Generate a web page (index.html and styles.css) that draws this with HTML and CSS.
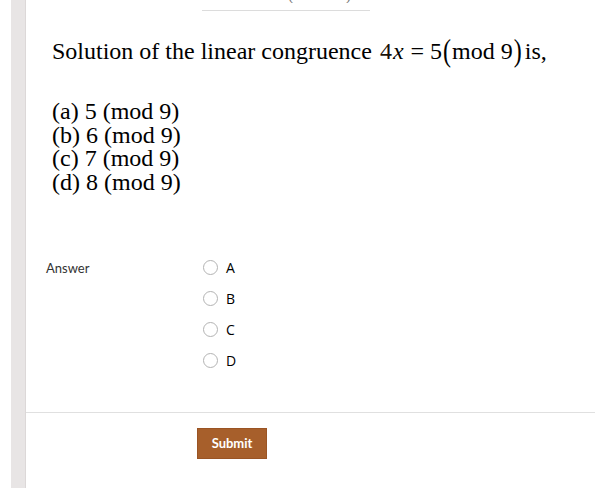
FILE: index.html
```html
<!DOCTYPE html>
<html>
<head>
<meta charset="utf-8">
<link rel="stylesheet" href="styles.css">
</head>
<body>
<div class="page">
  <div class="gutter"></div>
  <main class="main">
    <div class="topclip"><span class="topfrag">(mod 9)</span></div>
    <div class="topline"></div>
    <div class="question">
      <p class="title">Solution of the linear congruence <span class="math"><span class="m4">4</span><i class="mx">x</i><span class="meq">=</span><span class="m5">5</span><span class="paren">(</span><span class="mmod">mod 9</span><span class="paren">)</span></span><span class="tail">is,</span></p>
      <div class="options">
        <div class="opt">(a) 5 (mod 9)</div>
        <div class="opt">(b) 6 (mod 9)</div>
        <div class="opt">(c) 7 (mod 9)</div>
        <div class="opt">(d) 8 (mod 9)</div>
      </div>
    </div>
    <div class="answer">
      <div class="alabel">Answer</div>
      <div class="choices">
        <label class="choice"><span class="radio"></span><span class="ltr">A</span></label>
        <label class="choice"><span class="radio"></span><span class="ltr">B</span></label>
        <label class="choice"><span class="radio"></span><span class="ltr">C</span></label>
        <label class="choice"><span class="radio"></span><span class="ltr">D</span></label>
      </div>
    </div>
    <div class="sep"></div>
    <div class="actions"><button class="submit">Submit</button></div>
  </main>
</div>
</body>
</html>
```
FILE: styles.css
```css
html, body { margin: 0; padding: 0; background: #fff; }
body { font-family: "Liberation Serif", "Times New Roman", serif; color: #000; }
.page { display: flex; min-height: 488px; }
.gutter { width: 15px; margin-left: 11px; background: #e8e5e5; box-shadow: inset -1px 0 0 #dcd8d8; flex: none; }
.main { flex: 1; display: flex; flex-direction: column; }
.topclip { height: 3px; overflow: hidden; margin-left: 262px; width: 80px; }
.topfrag { display: block; font-size: 16px; line-height: 16px; margin-top: -13px; color: #777; letter-spacing: 2px; }
.topline { margin-left: 176px; width: 168px; height: 1px; background: #dcdcdc; margin-top: 7px; }
.question { padding-left: 26px; font-size: 24px; }
.title { margin: 26px 0 0; line-height: 28px; white-space: nowrap; }
.math { margin-left: 2px; font-family: "Liberation Serif", "Times New Roman", serif; }
.m4 { color: #1a1208; }
.mx { margin-left: 1px; font-family: "Liberation Serif", serif; font-style: italic; }
.meq { margin: 0 6px 0 7px; }
.paren { display: inline-block; transform: scaleY(1.3); margin: 0 1px; }
.tail { margin-left: 2px; }
.options { margin-top: 35px; }
.opt { line-height: 23.7px; height: 23.7px; }
.answer { display: flex; margin-top: 64px; font-family: Lato, "Open Sans", sans-serif; font-size: 13px; }
.alabel { width: 157px; padding-left: 20px; color: #333; line-height: 18px; }
.choices { display: flex; flex-direction: column; gap: 13px; }
.choice { display: flex; align-items: center; height: 18px; gap: 8px; color: #000; }
.radio { width: 13px; height: 13px; border: 1px solid #b3b3b3; border-radius: 50%; box-sizing: content-box; }
.ltr { font-family: "Open Sans", Lato, sans-serif; font-size: 14px; }
.sep { margin-top: 42px; height: 1px; background: #e0e0e0; margin-right: 1px; }
.actions { padding-left: 171px; margin-top: 15px; }
.submit { width: 70px; height: 31px; background: #a75f2b; border: 1px solid #9a5424; color: #fff; font-family: Lato, "Open Sans", sans-serif; font-weight: 700; font-size: 13px; padding: 0; }
```
